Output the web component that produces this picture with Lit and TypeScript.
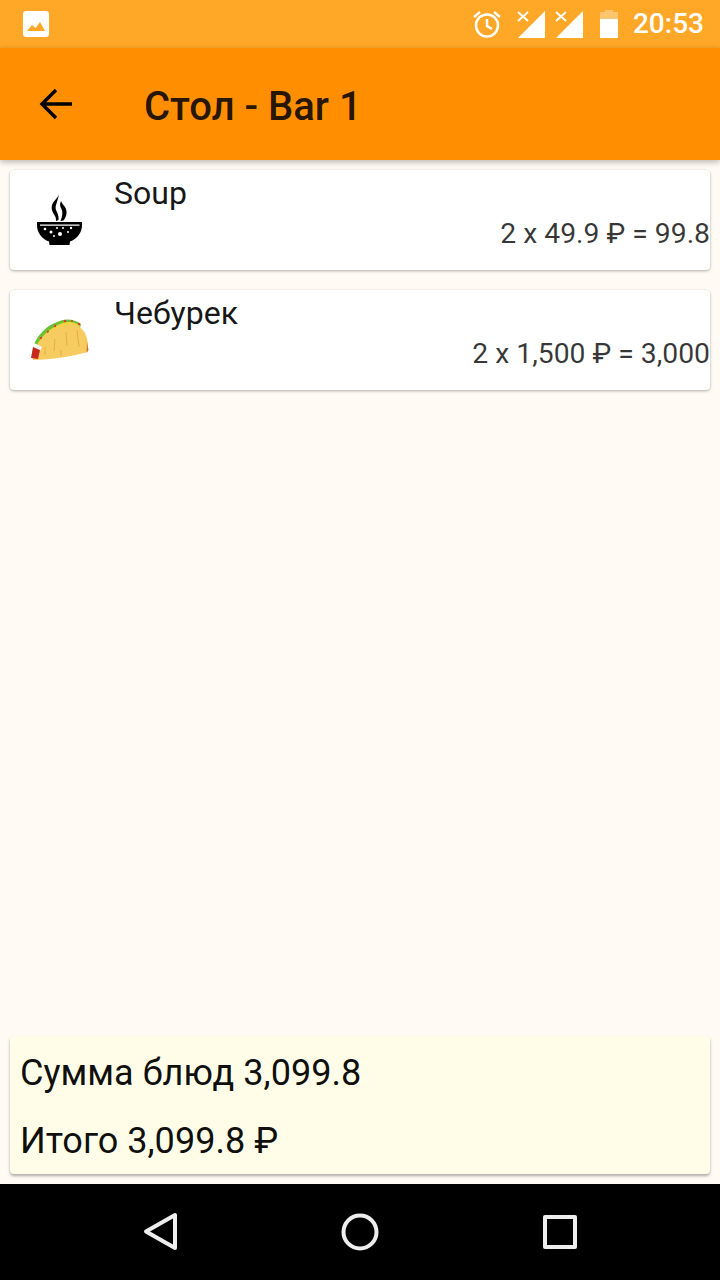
import { LitElement, html, css } from "lit";
import { customElement } from "lit/decorators.js";

const soup = html`<svg class="dish" width="60" height="60" viewBox="0 0 60 60">
  <path d="M29 4C28 8 24 10 22 15C20.500 20 24 24 25.500 27C26 28.500 26 29.500 26 31L28.500 30C29 26 27.500 23 26 20C24.500 16 28 11 29 4Z" fill="#000"/>
  <path d="M31 11C29.500 14 30 17 31.500 19C33 22 32.500 26 30.500 31L33.500 30.500C37 26 37.500 21 35 17C33.500 15 32 13.500 31 11Z" fill="#000"/>
  <path d="M7 32H52V35C52 43 47 49 40 51.500L39.500 55H19.500L19 51.500C12 49 7 43 7 35Z" fill="#000"/>
  <path d="M10 35.200H49.500" stroke="#fff" stroke-width="1.200"/>
  <g fill="#fff"><circle cx="15" cy="39" r="1.300"/><circle cx="21" cy="42" r="1.500"/><circle cx="27" cy="38" r="1"/><circle cx="33" cy="38" r="1"/><circle cx="41" cy="38" r="1.200"/><circle cx="30" cy="44" r="2"/><circle cx="38" cy="42" r="1"/><circle cx="24" cy="46" r="1"/></g>
</svg>`;

const taco = html`<svg class="dish" width="60" height="60" viewBox="0 0 60 60">
  <path d="M4 34C8 25 16 16 27 12C36 8 44 9 51 14L48 26L10 38Z" fill="#6fc034"/>
  <path d="M7 35C11 27 19 19 28 15C36 11 44 11 50 16L46 27L12 38Z" fill="#f5d53f"/>
  <g fill="#d8432a"><circle cx="11" cy="28" r="1.200"/><circle cx="18" cy="22" r="1.200"/><circle cx="25" cy="16" r="1.200"/><circle cx="35" cy="11" r="1.300"/><circle cx="42" cy="11" r="1"/><circle cx="49" cy="14" r="1.200"/><circle cx="15" cy="29" r="1"/></g>
  <path d="M3 49C6 40 9 32 13 27C19 20 28 17 36 15C44 13 51 16 55 23C58 29 58.500 36 57.500 42C50 44 42 46 32 47.500C22 49 12 50 3 50Z" fill="#f6cc60"/>
  <path d="M25 29L24 41M36 22L37 36M47 20L49 37M31 40L31 46M15 37L15 45" stroke="#e3ae48" stroke-width="1" fill="none"/>
  <path d="M57 32L58.500 40L56.500 43Z" fill="#c9752c"/>
  <path d="M4 33L12 37L10 41L3 38Z" fill="#fff"/>
  <path d="M1 48L3 37L10 40L8 49Z" fill="#c5281c"/>
</svg>`;

@customElement("app-root")
export class AppRoot extends LitElement {
  static styles = css`
    :host { display: block; width: 720px; height: 1280px; font-family: Roboto, "Noto Sans", sans-serif; }
    .page { height: 1280px; display: flex; flex-direction: column; background: #fffaf3; overflow: hidden; }
    .status { height: 48px; flex: none; background: #ffa726; display: flex; align-items: center; color: #fff; padding: 0 16px 0 23px; box-sizing: border-box; }
    .status .spacer { flex: 1; }
    .status svg { display: block; }
    .time { font-size: 28px; font-weight: 500; margin-left: 14px; line-height: 48px; }
    .alarm { margin-right: 15px; }
    .sig { margin-right: 10px; }
    .batt { margin-left: 16px; }
    .toolbar { height: 112px; flex: none; background: #ff8f00; display: flex; align-items: center; box-shadow: 0 2px 6px rgba(0,0,0,.28); position: relative; z-index: 1; }
    .back { width: 144px; flex: none; padding: 0 0 0 39px; box-sizing: border-box; }
    .back svg { display: block; }
    .title { font-size: 40px; font-weight: 500; color: rgba(0,0,0,.87); padding-top: 4px; }
    .list { flex: 1; display: flex; flex-direction: column; gap: 20px; padding: 10px 10px 0; }
    .card { height: 100px; background: #fff; border-radius: 4px; box-shadow: 0 1px 3px rgba(0,0,0,.32); display: flex; }
    .icon { width: 104px; flex: none; display: flex; align-items: center; justify-content: center; padding-right: 4px; box-sizing: border-box; }
    .dish { display: block; }
    .body { flex: 1; }
    .name { font-size: 32px; line-height: 38px; margin-top: 4px; color: rgba(0,0,0,.92); }
    .calc { font-size: 28.3px; line-height: 34px; margin-top: 5px; text-align: right; color: rgba(0,0,0,.78); white-space: nowrap; }
    .footer { flex: none; margin: 0 10px 10px; height: 138px; background: #fffde7; border-radius: 4px; box-shadow: 0 2px 3px rgba(0,0,0,.32); padding: 0 10px; box-sizing: border-box; display: flex; flex-direction: column; font-size: 36.1px; color: rgba(0,0,0,.95); }
    .footer div { height: 68px; line-height: 68px; }
    .footer div:first-child { margin-top: 3px; }
    .nav { height: 96px; flex: none; background: #000; display: flex; align-items: center; justify-content: space-between; padding: 0 140px; box-sizing: border-box; }
    .nav svg { display: block; }
  `;

  render() {
    return html`<div class="page">
      <div class="status">
        <svg width="26" height="26" viewBox="0 0 26 26"><path fill="#fff" d="M3 0H23A3 3 0 0 1 26 3V23A3 3 0 0 1 23 26H3A3 3 0 0 1 0 23V3A3 3 0 0 1 3 0Z"/><path fill="#ffa726" d="M4 20L9 14L12.500 17L17 11L22 20Z"/></svg>
        <div class="spacer"></div>
        <svg class="alarm" width="30" height="30" viewBox="0 0 30 30" fill="none" stroke="#fff" stroke-width="2.500"><circle cx="15" cy="16.500" r="11"/><path d="M15 10V17L20 20M2 8L8 3M28 8L22 3"/></svg>
        <svg class="sig" width="28" height="28" viewBox="0 0 28 28"><path fill="#fff" d="M28 1V28H1Z"/><path stroke="#fff" stroke-width="2" d="M1 2L11 11M11 2L1 11"/></svg>
        <svg width="28" height="28" viewBox="0 0 28 28"><path fill="#fff" d="M28 1V28H1Z"/><path stroke="#fff" stroke-width="2" d="M1 2L11 11M11 2L1 11"/></svg>
        <svg class="batt" width="20" height="30" viewBox="0 0 20 30"><path fill="#fff" opacity=".35" d="M6 1H14V3H19V10H1V3H6Z"/><path fill="#fff" d="M1 10H19V29H1Z"/></svg>
        <span class="time">20:53</span>
      </div>
      <div class="toolbar">
        <div class="back"><svg width="34" height="32" viewBox="0 0 34 32" fill="none" stroke="#000" stroke-width="3.400"><path d="M33 16H3M17 2L3 16L17 30"/></svg></div>
        <div class="title">Стол - Bar 1</div>
      </div>
      <div class="list">
        <div class="card">
          <div class="icon">${soup}</div>
          <div class="body"><div class="name">Soup</div><div class="calc">2 x 49.9 ₽ = 99.8</div></div>
        </div>
        <div class="card">
          <div class="icon">${taco}</div>
          <div class="body"><div class="name">Чебурек</div><div class="calc">2 x 1,500 ₽ = 3,000</div></div>
        </div>
      </div>
      <div class="footer"><div>Сумма блюд 3,099.8</div><div>Итого 3,099.8 ₽</div></div>
      <div class="nav">
        <svg width="40" height="40" viewBox="0 0 40 40" fill="none" stroke="#eee" stroke-width="4" stroke-linejoin="round"><path d="M35 3V36L6 19.500Z"/></svg>
        <svg width="40" height="40" viewBox="0 0 40 40" fill="none" stroke="#eee" stroke-width="4"><circle cx="20" cy="20" r="16.500"/></svg>
        <svg width="40" height="40" viewBox="0 0 40 40" fill="none" stroke="#eee" stroke-width="4" stroke-linejoin="round"><path d="M5 5H35V35H5Z"/></svg>
      </div>
    </div>`;
  }
}
